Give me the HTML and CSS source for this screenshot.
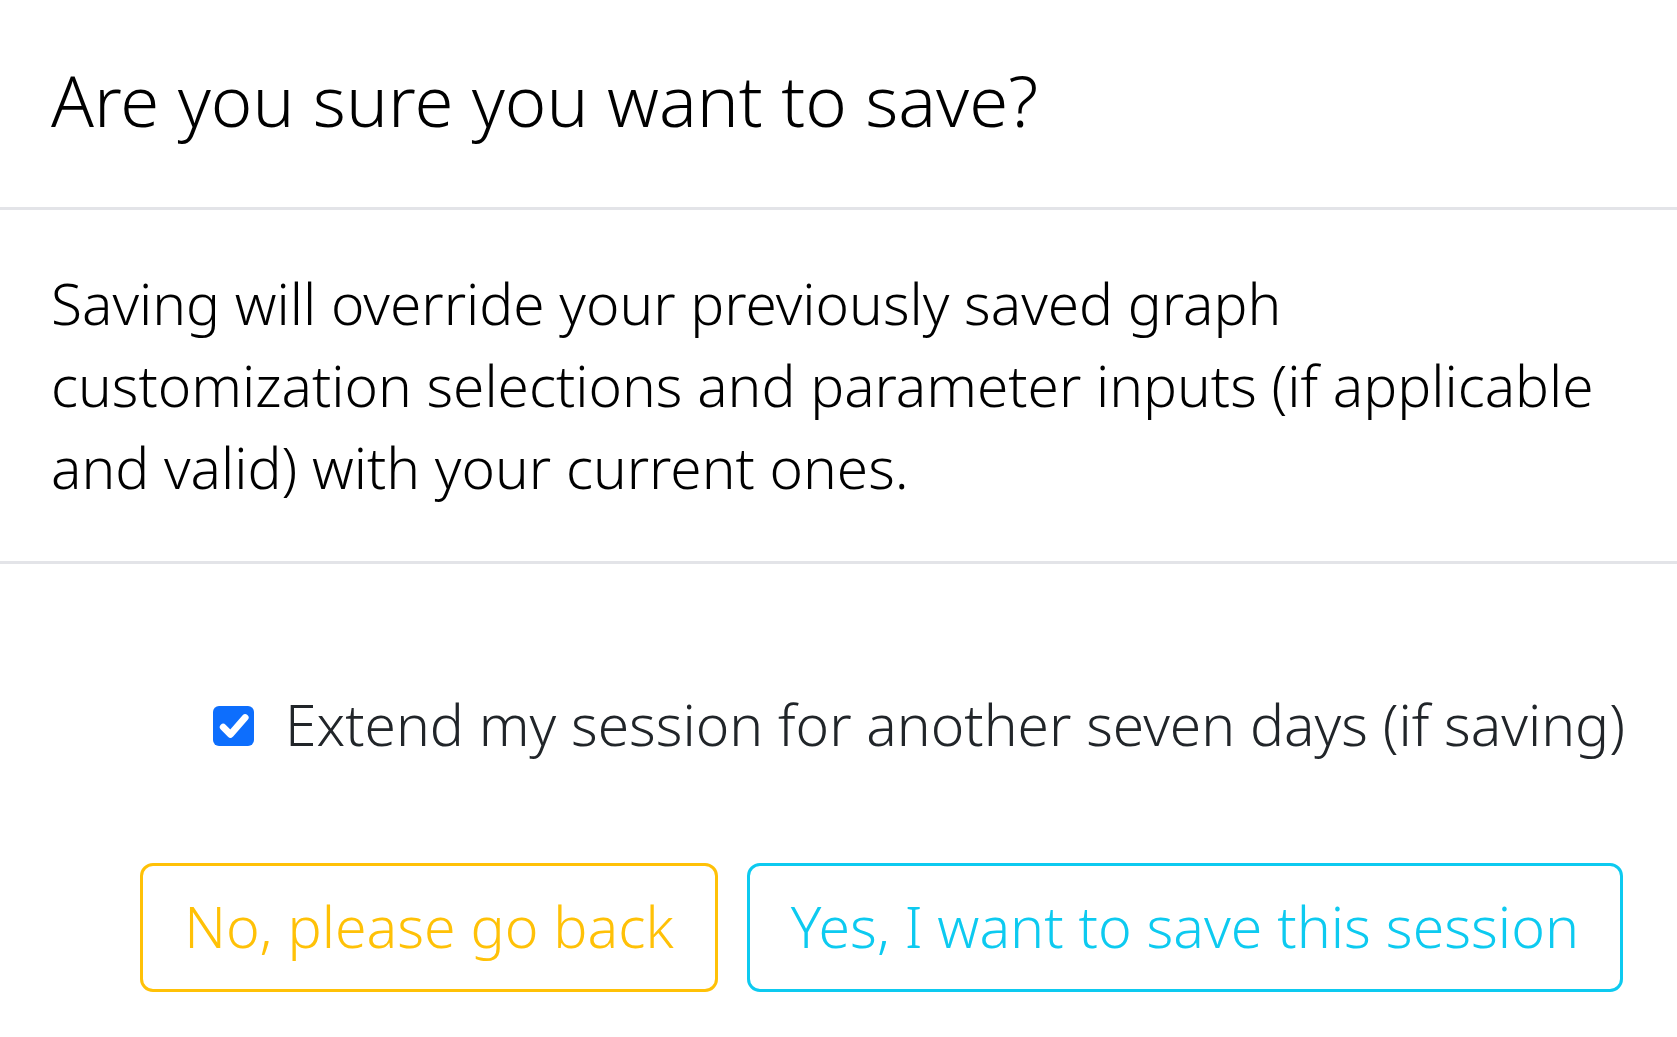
FILE: index.html
```html
<!DOCTYPE html>
<html lang="en">
<head>
<meta charset="utf-8">
<title>Save session</title>
<link rel="stylesheet" href="styles.css">
</head>
<body>
<div class="modal">
  <div class="modal-header">
    <h5 class="modal-title">Are you sure you want to save?</h5>
  </div>
  <div class="modal-body">
    <p class="body-text">Saving will override your previously saved graph customization selections and parameter inputs (if applicable and valid) with your current ones.</p>
  </div>
  <div class="modal-footer">
    <label class="form-check">
      <span class="check-box">
        <svg viewBox="0 0 20 20" width="40" height="40" aria-hidden="true"><path d="M4.6 10.6l3.6 3.6 7.4-8.4" fill="none" stroke="#fff" stroke-width="3.4" stroke-linecap="round" stroke-linejoin="round"/></svg>
      </span>
      <span class="check-label">Extend my session for another seven days (if saving)</span>
    </label>
    <div class="actions">
      <button class="btn btn-warning" type="button">No, please go back</button>
      <button class="btn btn-info" type="button">Yes, I want to save this session</button>
    </div>
  </div>
</div>
</body>
</html>
```
FILE: styles.css
```css
* { box-sizing: border-box; }
html, body { margin: 0; padding: 0; background: #fff; }
body {
  font-family: "Noto Sans", "Open Sans", sans-serif;
  font-weight: 300;
  color: #000;
  width: 1677px;
  height: 1037px;
  overflow: hidden;
}
.modal { display: flex; flex-direction: column; }
.modal-header {
  padding: 49px 51px 56px;
  border-bottom: 3px solid #e3e4e8;
}
.modal-title {
  margin: 0;
  font-size: 70.6px;
  font-weight: 300;
  line-height: 102px;
  color: #000;
}
.modal-body {
  padding: 52px 51px 53px;
  border-bottom: 3px solid #e3e4e8;
}
.body-text {
  margin: 0;
  font-size: 56.75px;
  line-height: 82px;
  color: #000;
}
.modal-footer {
  display: flex;
  flex-direction: column;
  align-items: flex-end;
  padding: 119px 52px 0 51px;
}
.form-check {
  display: flex;
  align-items: center;
  height: 82px;
}
.check-box {
  width: 41px;
  height: 40px;
  border-radius: 6px;
  background: #0d6efd;
  display: flex;
  align-items: center;
  justify-content: center;
  margin-right: 31px;
  margin-top: 3px;
}
.check-box svg { display: block; }
.check-label {
  font-size: 56.9px;
  line-height: 82px;
  color: #212529;
}
.actions {
  display: flex;
  gap: 29px;
  margin-top: 98px;
  margin-right: 2px;
}
.btn {
  font-family: inherit;
  font-weight: 300;
  font-size: 57.2px;
  line-height: 82px;
  padding: 19px 41px 22px;
  background: #fff;
  border: 3px solid;
  border-radius: 13px;
  cursor: pointer;
}
.btn-warning { color: #ffc107; border-color: #ffc107; }
.btn-info { color: #0dcaf0; border-color: #0dcaf0; }
```
